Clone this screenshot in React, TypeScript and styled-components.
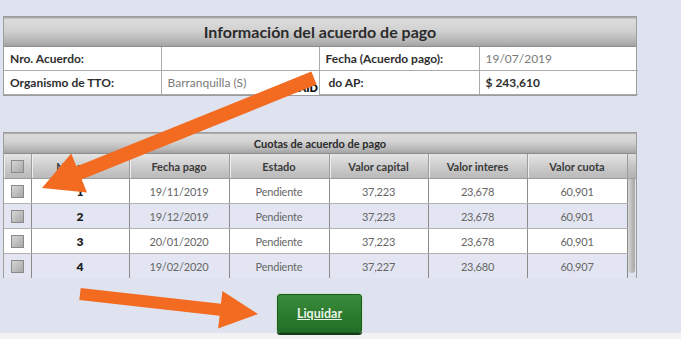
import React from "react";
import styled, { createGlobalStyle } from "styled-components";

const Global = createGlobalStyle`
  html, body { margin: 0; padding: 0; }
  body {
    background: #f2f2f4;
    font-family: Lato, "Open Sans", "Liberation Sans", sans-serif;
    width: 681px;
    height: 339px;
    overflow: hidden;
  }
`;

const Page = styled.div`
  position: relative;
  width: 681px;
  height: 333px;
  background: #dfe3f0;
  padding: 16px 0 0 3px;
  box-sizing: border-box;
  display: flex;
  flex-direction: column;
`;

const InfoPanel = styled.div`
  position: relative;
  width: 634px;
  border: 1px solid #9c9c9c;
  box-sizing: border-box;
  background: #fff;
`;

const HeaderBar = styled.div<{ $h: number; $size: number }>`
  height: ${(p) => p.$h}px;
  display: flex;
  align-items: center;
  justify-content: center;
  font-weight: 700;
  font-size: ${(p) => p.$size}px;
  color: #2b2b2b;
  background: linear-gradient(#9a9a9a 0, #dcdcdc 8%, #d2d2d2 45%, #b4b4b4 85%, #a2a2a2 100%);
  border-bottom: 1px solid #8e8e8e;
  box-sizing: border-box;
`;

const InfoTable = styled.table`
  width: 100%;
  border-collapse: collapse;
  table-layout: fixed;
  font-size: 12px;
`;

const InfoCell = styled.td<{ $bold?: boolean; $muted?: boolean }>`
  height: 23px;
  padding: 0 0 0 6px;
  border: 1px solid #ababab;
  border-top: none;
  font-weight: ${(p) => (p.$bold ? 700 : 400)};
  color: ${(p) => (p.$muted ? "#7a7a7a" : "#2e2e2e")};
  white-space: nowrap;
  overflow: hidden;
  &:first-child { border-left: none; }
  &:last-child { border-right: none; }
`;

const Patch = styled.span`
  position: absolute;
  left: 262px;
  top: 63px;
  width: 53px;
  height: 15px;
  background: #fff;
  font-size: 11px;
  font-weight: 800;
  color: #111;
  padding-right: 1px;
  box-sizing: border-box;
  line-height: 16px;
  text-align: right;
  overflow: hidden;
  white-space: nowrap;
`;

const CuotasPanel = styled.div`
  margin-top: 36px;
  width: 634px;
  border-left: 1px solid #9c9c9c;
  border-top: 1px solid #9c9c9c;
  border-right: 1px solid #9c9c9c;
  box-sizing: border-box;
`;

const Body = styled.div`
  display: flex;
`;

const Grid = styled.table`
  width: 623px;
  border-collapse: collapse;
  table-layout: fixed;
  font-size: 11px;
`;

const HeadCell = styled.th`
  height: 24px;
  padding: 0;
  font-weight: 700;
  font-size: 11px;
  color: #3a3a3a;
  background: linear-gradient(#e4e4e4, #cdcdcd 50%, #b9b9b9);
  border-right: 1px solid #9d9d9d;
  border-bottom: 1px solid #9d9d9d;
  box-shadow: inset 1px 0 0 #eeeeee;
  text-align: center;
`;

const Row = styled.tr<{ $alt: boolean }>`
  background: ${(p) => (p.$alt ? "#e3e6f2" : "#ffffff")};
`;

const Cell = styled.td<{ $bold?: boolean; $last?: boolean }>`
  height: 24px;
  padding: 0;
  text-align: center;
  color: ${(p) => (p.$bold ? "#1e1e1e" : "#666")};
  font-weight: ${(p) => (p.$bold ? 800 : 400)};
  font-size: ${(p) => (p.$bold ? 12 : 11)}px;
  border-right: 1px solid #8c8c8c;
  border-bottom: ${(p) => (p.$last ? "none" : "1px solid #b0b0b0")};
  letter-spacing: -0.2px;
`;

const Check = styled.span`
  display: inline-block;
  width: 11px;
  height: 11px;
  vertical-align: middle;
  border: 1px solid #8a8a8a;
  background: linear-gradient(135deg, #d6d6d6, #a8a8a8);
`;

const ScrollCol = styled.div`
  width: 9px;
  display: flex;
  flex-direction: column;
`;

const ScrollHead = styled.div`
  height: 25px;
  background: linear-gradient(#e0e0e0, #c4c4c4 50%, #b2b2b2);
  border-bottom: 1px solid #9d9d9d;
  box-sizing: border-box;
`;

const ScrollThumb = styled.div`
  height: 94px;
  margin: 0 1px 0 0;
  background: linear-gradient(90deg, #d8d8d8, #b8b8b8 60%, #a8a8a8);
  border-radius: 0 0 4px 4px;
`;

const Clip = styled.div`
  height: 124px;
  overflow: hidden;
`;

const Actions = styled.div`
  display: flex;
  padding-left: 274px;
  margin-top: 16px;
`;

const Button = styled.button`
  width: 85px;
  height: 39px;
  border: 1px solid #1c5a1f;
  border-radius: 3px;
  background: linear-gradient(#3a8c3c, #2a7a2d 60%, #246e27);
  box-shadow: 0 2px 0 #143f16, 0 0 0 1px #cfe3cf;
  color: #e9f3e9;
  font-family: Lato, "Open Sans", sans-serif;
  font-size: 12.5px;
  font-weight: 700;
  text-decoration: underline;
  cursor: pointer;
  padding: 0;
`;

const Overlay = styled.svg`
  position: absolute;
  left: 0;
  top: 0;
  pointer-events: none;
`;

type Pt = [number, number];
function arrow(S: Pt, T: Pt, hw: number, hl: number, hhw: number): string {
  const dx = T[0] - S[0];
  const dy = T[1] - S[1];
  const L = Math.hypot(dx, dy);
  const u: Pt = [dx / L, dy / L];
  const n: Pt = [-u[1], u[0]];
  const B: Pt = [T[0] - hl * u[0], T[1] - hl * u[1]];
  const p = (b: Pt, k: number): string => `${(b[0] + k * n[0]).toFixed(1)},${(b[1] + k * n[1]).toFixed(1)}`;
  return [p(S, hw), p(B, hw), p(B, hhw), `${T[0]},${T[1]}`, p(B, -hhw), p(B, -hw), p(S, -hw)].join(" ");
}

const cuotas = [
  { n: "1", f: "19/11/2019", c: "37,223", i: "23,678", v: "60,901" },
  { n: "2", f: "19/12/2019", c: "37,223", i: "23,678", v: "60,901" },
  { n: "3", f: "20/01/2020", c: "37,223", i: "23,678", v: "60,901" },
  { n: "4", f: "19/02/2020", c: "37,227", i: "23,680", v: "60,907" },
];

const widths = [27, 98, 100, 100, 99, 99, 100];

export default function App() {
  return (
    <>
      <Global />
      <Page>
        <InfoPanel>
          <HeaderBar $h={30} $size={16}>Información del acuerdo de pago</HeaderBar>
          <InfoTable>
            <colgroup>
              <col style={{ width: 157 }} />
              <col style={{ width: 158 }} />
              <col style={{ width: 160 }} />
              <col style={{ width: 159 }} />
            </colgroup>
            <tbody>
              <tr>
                <InfoCell $bold>Nro. Acuerdo:</InfoCell>
                <InfoCell></InfoCell>
                <InfoCell $bold>Fecha (Acuerdo pago):</InfoCell>
                <InfoCell $muted>19/07/2019</InfoCell>
              </tr>
              <tr>
                <InfoCell $bold>Organismo de TTO:</InfoCell>
                <InfoCell $muted>Barranquilla (S)</InfoCell>
                <InfoCell $bold>&nbsp;do AP:</InfoCell>
                <InfoCell $bold>$ 243,610</InfoCell>
              </tr>
            </tbody>
          </InfoTable>
          <Patch>SAID</Patch>
        </InfoPanel>

        <CuotasPanel>
          <HeaderBar $h={21} $size={11}>Cuotas de acuerdo de pago</HeaderBar>
          <Clip>
            <Body>
              <Grid>
                <colgroup>
                  {widths.map((w, k) => (
                    <col key={k} style={{ width: w }} />
                  ))}
                </colgroup>
                <thead>
                  <tr>
                    <HeadCell><Check /></HeadCell>
                    <HeadCell>No. cuota</HeadCell>
                    <HeadCell>Fecha pago</HeadCell>
                    <HeadCell>Estado</HeadCell>
                    <HeadCell>Valor capital</HeadCell>
                    <HeadCell>Valor interes</HeadCell>
                    <HeadCell>Valor cuota</HeadCell>
                  </tr>
                </thead>
                <tbody>
                  {cuotas.map((q, k) => {
                    const last = k === cuotas.length - 1;
                    return (
                      <Row key={q.n} $alt={k % 2 === 1}>
                        <Cell $last={last}><Check /></Cell>
                        <Cell $bold $last={last}>{q.n}</Cell>
                        <Cell $last={last}>{q.f}</Cell>
                        <Cell $last={last}>Pendiente</Cell>
                        <Cell $last={last}>{q.c}</Cell>
                        <Cell $last={last}>{q.i}</Cell>
                        <Cell $last={last}>{q.v}</Cell>
                      </Row>
                    );
                  })}
                </tbody>
              </Grid>
              <ScrollCol>
                <ScrollHead />
                <ScrollThumb />
              </ScrollCol>
            </Body>
          </Clip>
        </CuotasPanel>

        <Actions>
          <Button>Liquidar</Button>
        </Actions>

        <Overlay width={681} height={339} viewBox="0 0 681 339">
          <polygon points={arrow([314, 78], [42, 188], 7, 40, 21)} fill="#f26b21" />
          <polygon points={arrow([80, 294], [258, 314], 6, 38, 19)} fill="#f26b21" />
        </Overlay>
      </Page>
    </>
  );
}
